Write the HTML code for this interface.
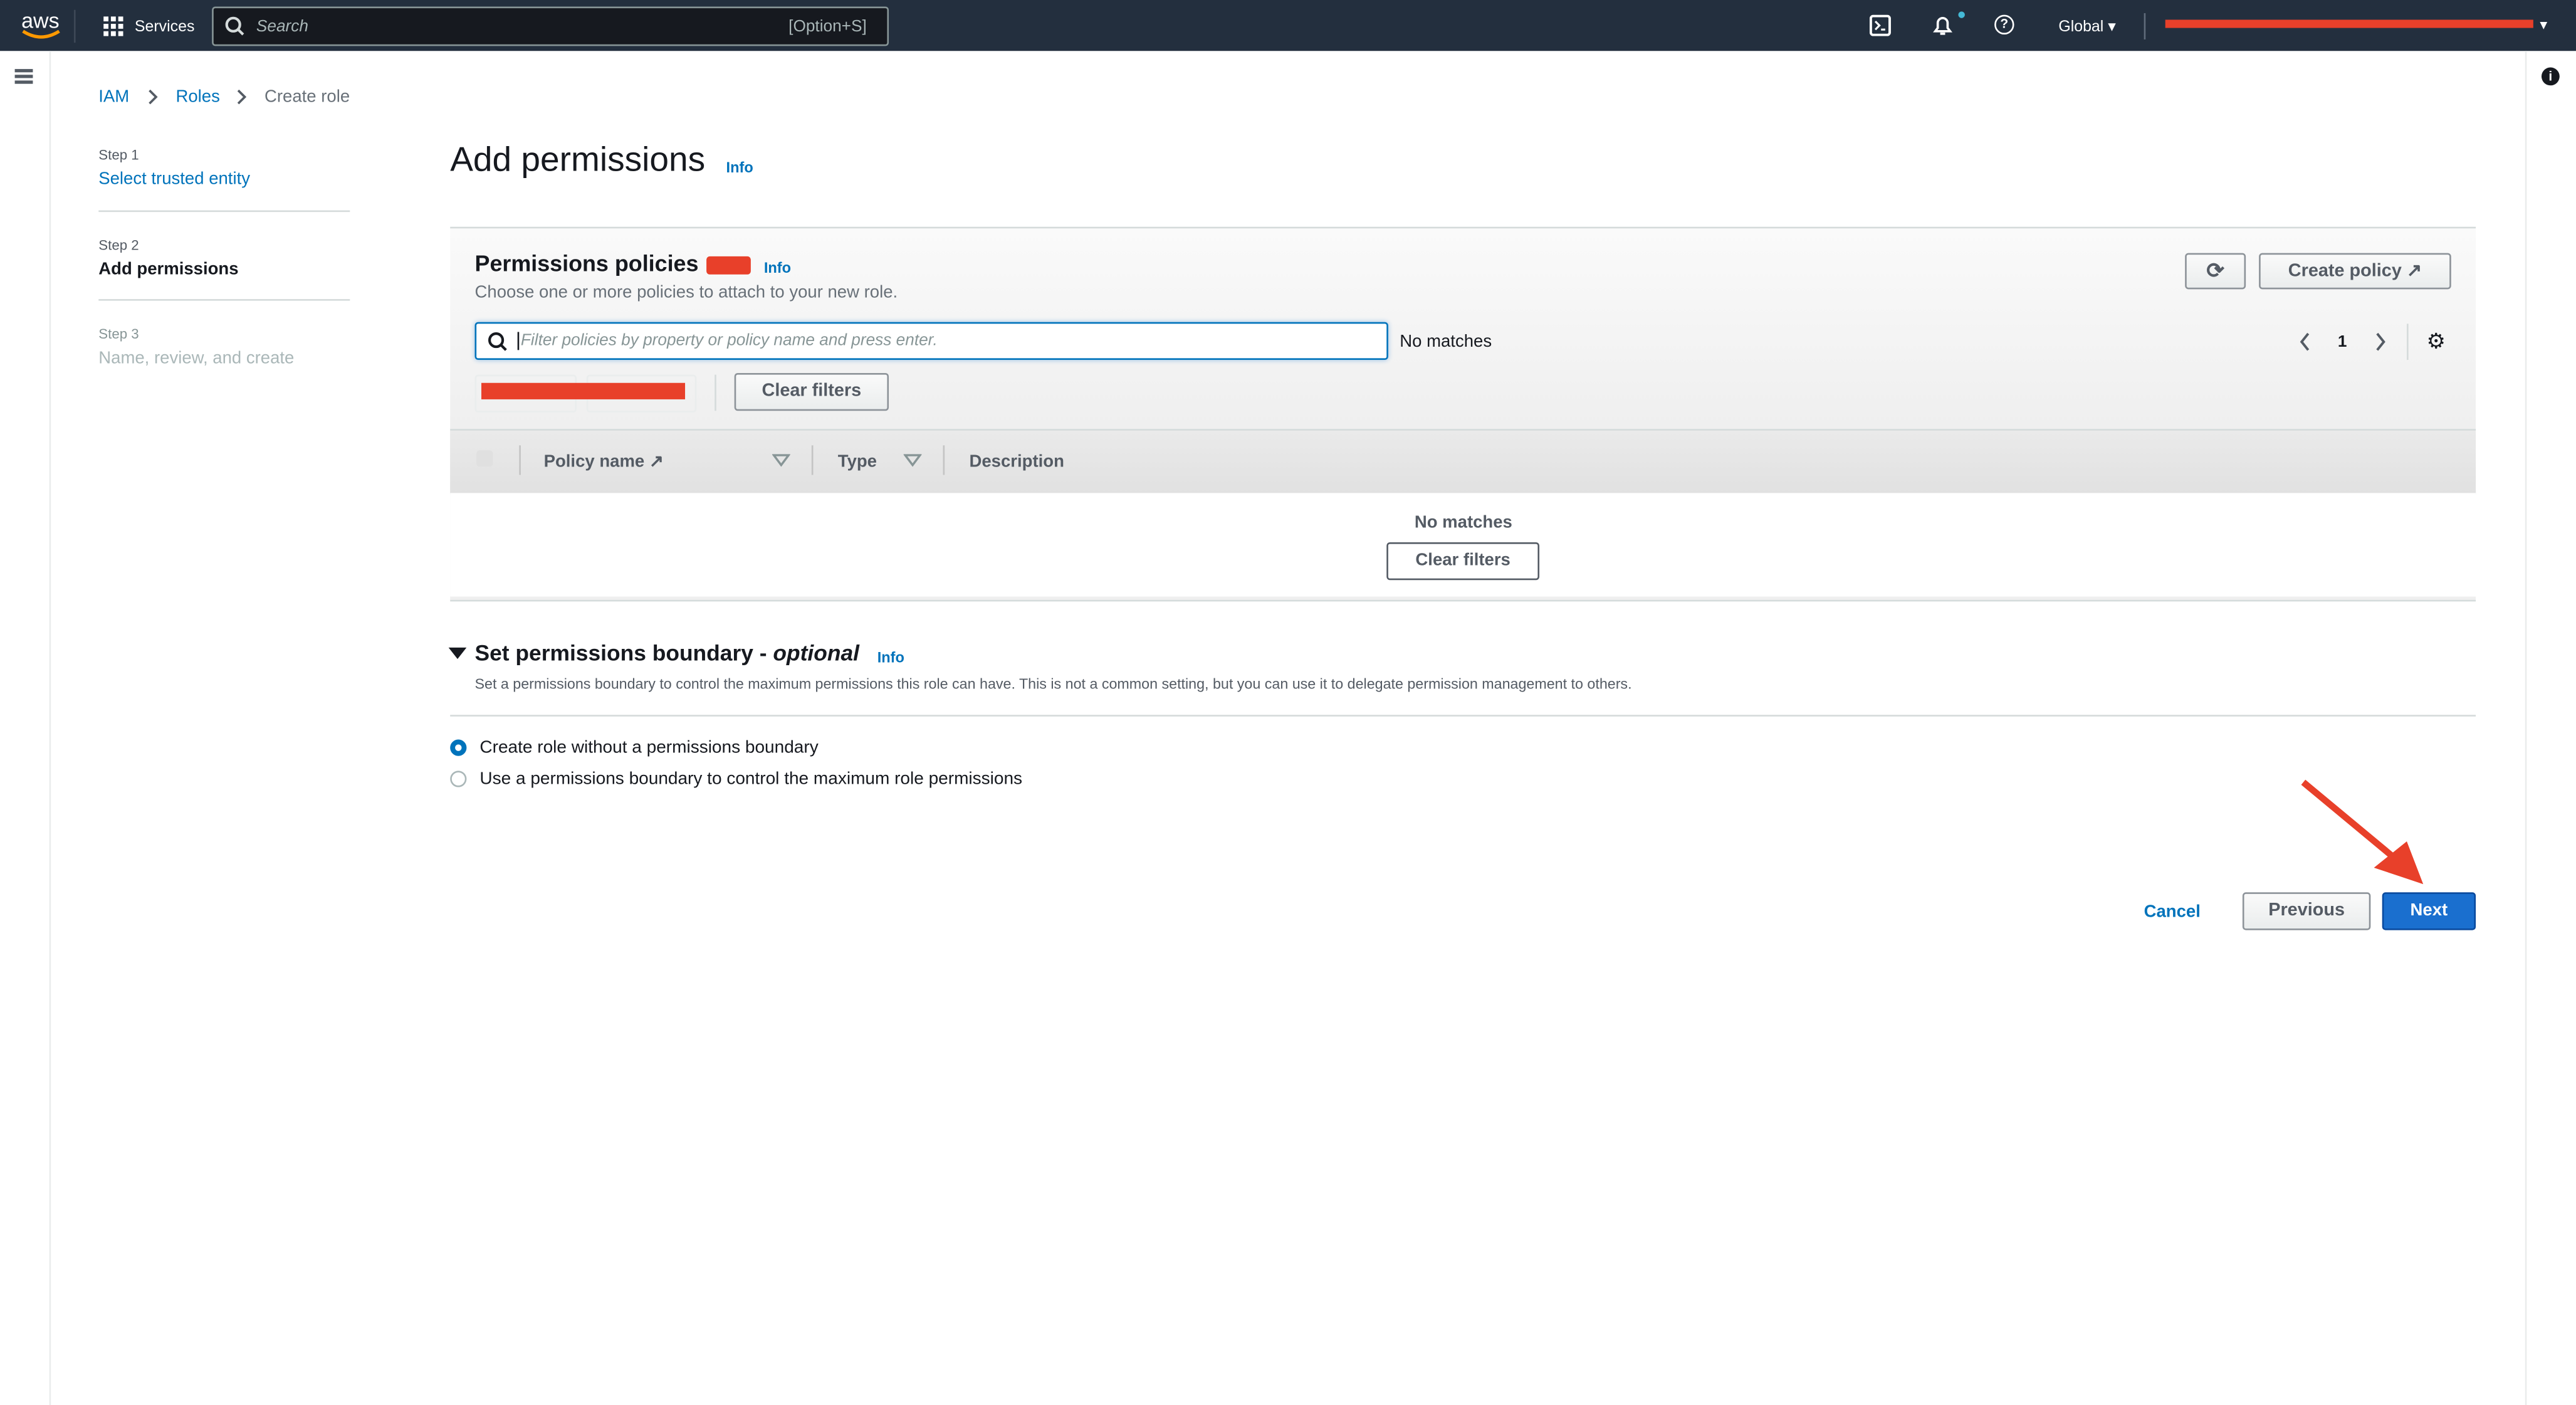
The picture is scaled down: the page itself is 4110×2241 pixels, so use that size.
<!DOCTYPE html>
<html><head><meta charset="utf-8"><style>
html,body{margin:0;padding:0;width:4110px;height:2240px;overflow:hidden;background:#fff}
#s{position:absolute;left:0;top:0;width:1568px;height:855px;transform:scale(2.62117);transform-origin:0 0;font-family:"Liberation Sans",sans-serif;color:#16191f}
.a{position:absolute}
.btn{position:absolute;border:1px solid #8d9399;border-radius:2px;background:linear-gradient(#fafafa,#eaeded);font-weight:bold;font-size:11px;color:#545b64;text-align:center;box-sizing:border-box}
.info{color:#0073bb;font-size:9px;font-weight:bold}
.lnk{color:#0073bb}
</style></head><body><div id="s">
<div class="a" style="left:0;top:0;width:1568px;height:31px;background:#232f3e"></div>
<div class="a" style="left:13px;top:5px;color:#fff;font-size:13px">aws</div>
<svg class="a" style="left:12px;top:17px" width="26" height="8"><path d="M2 2 Q13 9 24 2" stroke="#ff9900" stroke-width="2" fill="none"/></svg>
<div class="a" style="left:45px;top:6px;width:1px;height:20px;background:#3d4856"></div>
<svg class="a" style="left:63px;top:10px" width="12" height="12"><g fill="#fff"><rect x="0" y="0" width="3" height="3"/><rect x="4.5" y="0" width="3" height="3"/><rect x="9" y="0" width="3" height="3"/><rect x="0" y="4.5" width="3" height="3"/><rect x="4.5" y="4.5" width="3" height="3"/><rect x="9" y="4.5" width="3" height="3"/><rect x="0" y="9" width="3" height="3"/><rect x="4.5" y="9" width="3" height="3"/><rect x="9" y="9" width="3" height="3"/></g></svg>
<div class="a" style="left:82px;top:11px;color:#fff;font-size:9.5px">Services</div>
<div class="a" style="left:129px;top:4px;width:410px;height:22px;background:#16191f;border:1px solid #879596;border-radius:2px"></div>
<svg class="a" style="left:137px;top:10px" width="12" height="12"><circle cx="5" cy="5" r="4" stroke="#d5dbdb" stroke-width="1.6" fill="none"/><line x1="8" y1="8" x2="11" y2="11" stroke="#d5dbdb" stroke-width="1.6"/></svg>
<div class="a" style="left:156px;top:11px;color:#aab7b8;font-size:10px;font-style:italic">Search</div>
<div class="a" style="left:480px;top:11px;color:#aab7b8;font-size:10px">[Option+S]</div>
<svg class="a" style="left:1138px;top:9px" width="13" height="13"><rect x="0.75" y="0.75" width="11.5" height="11.5" rx="1.5" stroke="#fff" stroke-width="1.5" fill="none"/><path d="M3.5 4 L6 6.5 L3.5 9 M7 9 H9.5" stroke="#fff" stroke-width="1.2" fill="none"/></svg>
<svg class="a" style="left:1176px;top:9px" width="13" height="13"><path d="M2 10 H11 L9.5 8 V5 A3 3 0 0 0 3.5 5 V8 Z M5 11.5 H8" stroke="#fff" stroke-width="1.4" fill="none"/></svg>
<div class="a" style="left:1192px;top:7px;width:4px;height:4px;border-radius:2px;background:#44b9d6"></div>
<div class="a" style="left:1214px;top:9px;width:12px;height:12px;border:1.5px solid #fff;border-radius:50%;box-sizing:border-box;color:#fff;font-size:8px;text-align:center;line-height:9px;font-weight:bold">?</div>
<div class="a" style="left:1253px;top:11px;color:#fff;font-size:9.5px">Global ▾</div>
<div class="a" style="left:1305px;top:8px;width:1px;height:16px;background:#5f6b7a"></div>
<div class="a" style="left:1318px;top:12px;width:224px;height:5px;background:#e8402a"></div>
<div class="a" style="left:1546px;top:10px;color:#fff;font-size:9px">▾</div>
<div class="a" style="left:30px;top:31px;width:1px;height:824px;background:#eaeded"></div>
<div class="a" style="left:1537px;top:31px;width:1px;height:824px;background:#eaeded"></div>
<div class="a" style="left:9px;top:42px;width:11px;height:2px;background:#545b64;box-shadow:0 3.5px 0 #545b64,0 7px 0 #545b64"></div>
<div class="a" style="left:1547px;top:41px;width:11px;height:11px;border-radius:50%;background:#16191f;color:#fff;font-size:8px;font-weight:bold;text-align:center;line-height:11px">i</div>
<div class="a lnk" style="left:60px;top:53px;font-size:10.5px">IAM</div>
<svg class="a" style="left:89px;top:54px" width="8" height="10"><path d="M2 1 L6 5 L2 9" stroke="#545b64" stroke-width="1.4" fill="none"/></svg>
<div class="a lnk" style="left:107px;top:53px;font-size:10.5px">Roles</div>
<svg class="a" style="left:143px;top:54px" width="8" height="10"><path d="M2 1 L6 5 L2 9" stroke="#545b64" stroke-width="1.4" fill="none"/></svg>
<div class="a" style="left:161px;top:53px;font-size:10.5px;color:#687078">Create role</div>
<div class="a" style="left:60px;top:89px;font-size:8.5px;color:#545b64">Step 1</div>
<div class="a lnk" style="left:60px;top:103px;font-size:10.5px">Select trusted entity</div>
<div class="a" style="left:60px;top:128px;width:153px;height:1px;background:#d5dbdb"></div>
<div class="a" style="left:60px;top:144px;font-size:8.5px;color:#545b64">Step 2</div>
<div class="a" style="left:60px;top:158px;font-size:10.5px;font-weight:bold">Add permissions</div>
<div class="a" style="left:60px;top:182px;width:153px;height:1px;background:#d5dbdb"></div>
<div class="a" style="left:60px;top:198px;font-size:8.5px;color:#879596">Step 3</div>
<div class="a" style="left:60px;top:212px;font-size:10.5px;color:#aab7b8">Name, review, and create</div>
<div class="a" style="left:274px;top:86px;font-size:21px">Add permissions</div>
<div class="a info" style="left:442px;top:97px">Info</div>
<div class="a" style="left:274px;top:138px;width:1233px;height:226px;border-top:1px solid #d5dbdb;border-bottom:1px solid #d5dbdb;background:linear-gradient(#fafafa,#efefef 120px)"></div>
<div class="a" style="left:289px;top:153px;font-size:13.7px;font-weight:bold">Permissions policies</div>
<div class="a" style="left:430px;top:156px;width:27px;height:11px;background:#e8402a;border-radius:2px"></div>
<div class="a info" style="left:465px;top:158px">Info</div>
<div class="a" style="left:289px;top:172px;font-size:10.5px;color:#687078">Choose one or more policies to attach to your new role.</div>
<div class="btn" style="left:1330px;top:154px;width:37px;height:22px;line-height:20px;font-size:13px">⟳</div>
<div class="btn" style="left:1375px;top:154px;width:117px;height:22px;line-height:20px">Create policy ↗</div>
<div class="a" style="left:289px;top:196px;width:556px;height:23px;border:1px solid #0073bb;border-radius:2px;background:#fff;box-sizing:border-box;box-shadow:0 0 3px #9ac2e6"></div>
<svg class="a" style="left:297px;top:202px" width="12" height="12"><circle cx="5" cy="5" r="4" stroke="#16191f" stroke-width="1.6" fill="none"/><line x1="8" y1="8" x2="11" y2="11" stroke="#16191f" stroke-width="1.6"/></svg>
<div class="a" style="left:315px;top:202px;font-size:10px;color:#879596;font-style:italic;border-left:1px solid #16191f;padding-left:1px">Filter policies by property or policy name and press enter.</div>
<div class="a" style="left:852px;top:202px;font-size:10.5px;color:#16191f">No matches</div>
<svg class="a" style="left:1399px;top:202px" width="8" height="12"><path d="M6 1 L2 6 L6 11" stroke="#545b64" stroke-width="1.5" fill="none"/></svg>
<div class="a" style="left:1423px;top:203px;font-size:10px;font-weight:bold">1</div>
<svg class="a" style="left:1445px;top:202px" width="8" height="12"><path d="M2 1 L6 6 L2 11" stroke="#545b64" stroke-width="1.5" fill="none"/></svg>
<div class="a" style="left:1465px;top:197px;width:1px;height:22px;background:#d5dbdb"></div>
<div class="a" style="left:1477px;top:200px;font-size:13px;color:#16191f">⚙</div>
<div class="a" style="left:289px;top:228px;width:60px;height:21px;border:1px solid #eaeded;border-radius:2px"></div>
<div class="a" style="left:357px;top:228px;width:65px;height:21px;border:1px solid #eaeded;border-radius:2px"></div>
<div class="a" style="left:293px;top:233px;width:124px;height:10px;background:#e8402a"></div>
<div class="a" style="left:435px;top:228px;width:1px;height:22px;background:#d5dbdb"></div>
<div class="btn" style="left:447px;top:227px;width:94px;height:23px;line-height:21px">Clear filters</div>
<div class="a" style="left:274px;top:261px;width:1233px;height:38px;background:linear-gradient(#eaeaea,#e1e1e1);border-top:1px solid #d5dbdb;border-bottom:1px solid #d5dbdb"></div>
<div class="a" style="left:290px;top:274px;width:10px;height:10px;background:#e0e0e0;border-radius:2px"></div>
<div class="a" style="left:316px;top:271px;width:1px;height:18px;background:#c4c4c4"></div>
<div class="a" style="left:331px;top:275px;font-size:10.5px;font-weight:bold;color:#545b64">Policy name ↗</div>
<svg class="a" style="left:470px;top:276px" width="11" height="8"><path d="M1 1 H10 L5.5 7 Z" stroke="#879596" stroke-width="1.3" fill="none"/></svg>
<div class="a" style="left:494px;top:271px;width:1px;height:18px;background:#c4c4c4"></div>
<div class="a" style="left:510px;top:275px;font-size:10.5px;font-weight:bold;color:#545b64">Type</div>
<svg class="a" style="left:550px;top:276px" width="11" height="8"><path d="M1 1 H10 L5.5 7 Z" stroke="#879596" stroke-width="1.3" fill="none"/></svg>
<div class="a" style="left:574px;top:271px;width:1px;height:18px;background:#c4c4c4"></div>
<div class="a" style="left:590px;top:275px;font-size:10.5px;font-weight:bold;color:#545b64">Description</div>
<div class="a" style="left:274px;top:300px;width:1233px;height:63px;background:#fff"></div>
<div class="a" style="left:861px;top:312px;font-size:10.5px;font-weight:bold;color:#545b64">No matches</div>
<div class="a" style="left:844px;top:330px;width:93px;height:23px;border:1px solid #545b64;border-radius:2px;box-sizing:border-box;font-size:10.5px;font-weight:bold;color:#545b64;text-align:center;line-height:21px">Clear filters</div>
<svg class="a" style="left:273px;top:394px" width="11" height="8"><path d="M0 0 H11 L5.5 7 Z" fill="#16191f"/></svg>
<div class="a" style="left:289px;top:390px;font-size:13.5px;font-weight:bold">Set permissions boundary - <i>optional</i></div>
<div class="a info" style="left:534px;top:395px">Info</div>
<div class="a" style="left:289px;top:411px;font-size:8.9px;color:#545b64">Set a permissions boundary to control the maximum permissions this role can have. This is not a common setting, but you can use it to delegate permission management to others.</div>
<div class="a" style="left:274px;top:435px;width:1233px;height:1px;background:#d5dbdb"></div>
<div class="a" style="left:274px;top:450px;width:10px;height:10px;border-radius:50%;border:3px solid #0073bb;box-sizing:border-box;background:#fff"></div>
<div class="a" style="left:292px;top:449px;font-size:10.7px">Create role without a permissions boundary</div>
<div class="a" style="left:274px;top:469px;width:10px;height:10px;border-radius:50%;border:1px solid #aab7b8;box-sizing:border-box"></div>
<div class="a" style="left:292px;top:468px;font-size:10.7px">Use a permissions boundary to control the maximum role permissions</div>
<div class="a lnk" style="left:1305px;top:549px;font-size:10.5px;font-weight:bold">Cancel</div>
<div class="btn" style="left:1365px;top:543px;width:78px;height:23px;line-height:21px">Previous</div>
<div class="a" style="left:1450px;top:543px;width:57px;height:23px;background:#1a6fcf;border:1px solid #0a4a9e;border-radius:2px;box-sizing:border-box;color:#fff;font-size:10.5px;font-weight:bold;text-align:center;line-height:21px">Next</div>
<svg class="a" style="left:1395px;top:470px" width="115" height="75"><line x1="7" y1="6" x2="66" y2="55" stroke="#e8402a" stroke-width="4"/><polygon points="80,68 50,58 70,42" fill="#e8402a"/></svg>
</div></body></html>
